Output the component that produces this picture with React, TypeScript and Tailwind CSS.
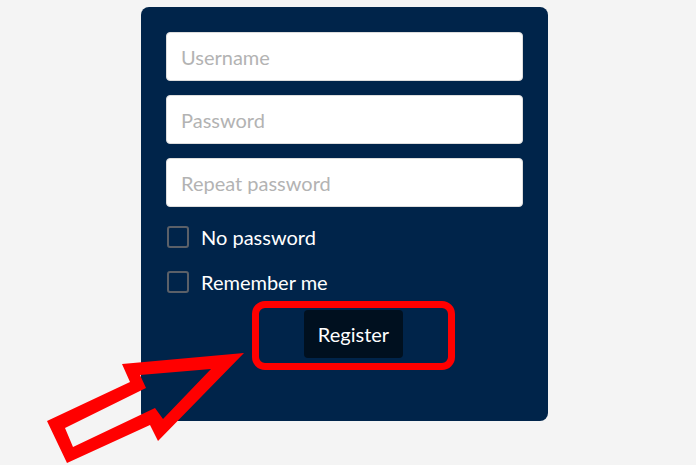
import React from "react";

export default function App() {
  return (
    <div className="relative w-[696px] h-[465px] overflow-hidden bg-[#f4f4f4]" style={{ fontFamily: "Lato, 'Noto Sans', sans-serif" }}>
      <div className="ml-[141px] pt-[7px]">
        <div className="w-[407px] h-[414px] rounded-[8px] bg-[#00244a] px-[25px] pt-[25px]">
          <div className="flex flex-col gap-[14px]">
            {["Username", "Password", "Repeat password"].map((p) => (
              <input
                key={p}
                placeholder={p}
                type={p === "Username" ? "text" : "password"}
                className="h-[49px] w-full rounded-[4px] bg-white px-[14px] text-[20px] text-[#333] placeholder:text-[#b3b3b3] outline-none border border-[#ddd]"
              />
            ))}
          </div>
          <div className="mt-[19px] flex flex-col gap-[23px]">
            {["No password", "Remember me"].map((t) => (
              <label key={t} className="flex items-center h-[22px] pl-[1px]">
                <span className="w-[22px] h-[22px] rounded-[3px] border-2 border-[#5b6068] box-border" />
                <span className="ml-[12px] text-[20px] text-white leading-none">{t}</span>
              </label>
            ))}
          </div>
          <div className="mt-[17px] ml-[138px]">
            <button className="h-[48px] w-[99px] rounded-[4px] bg-[#00101f] text-[20px] text-white">Register</button>
          </div>
        </div>
      </div>
      <div className="absolute left-[252px] top-[301px] w-[203px] h-[69px] rounded-[13px] border-[7px] border-[#ff0000]" />
      <svg className="absolute left-0 top-0" width="696" height="465" viewBox="0 0 696 465">
        <path
          fillRule="evenodd"
          fill="#ff0000"
          d="M244 353 L122 364 L130 382 L47 421 L67 463 L150 425 L158 441 Z M211 369 L140 375 L146 388 L65 428 L73 447 L155 408 L163 419 Z"
        />
      </svg>
    </div>
  );
}
